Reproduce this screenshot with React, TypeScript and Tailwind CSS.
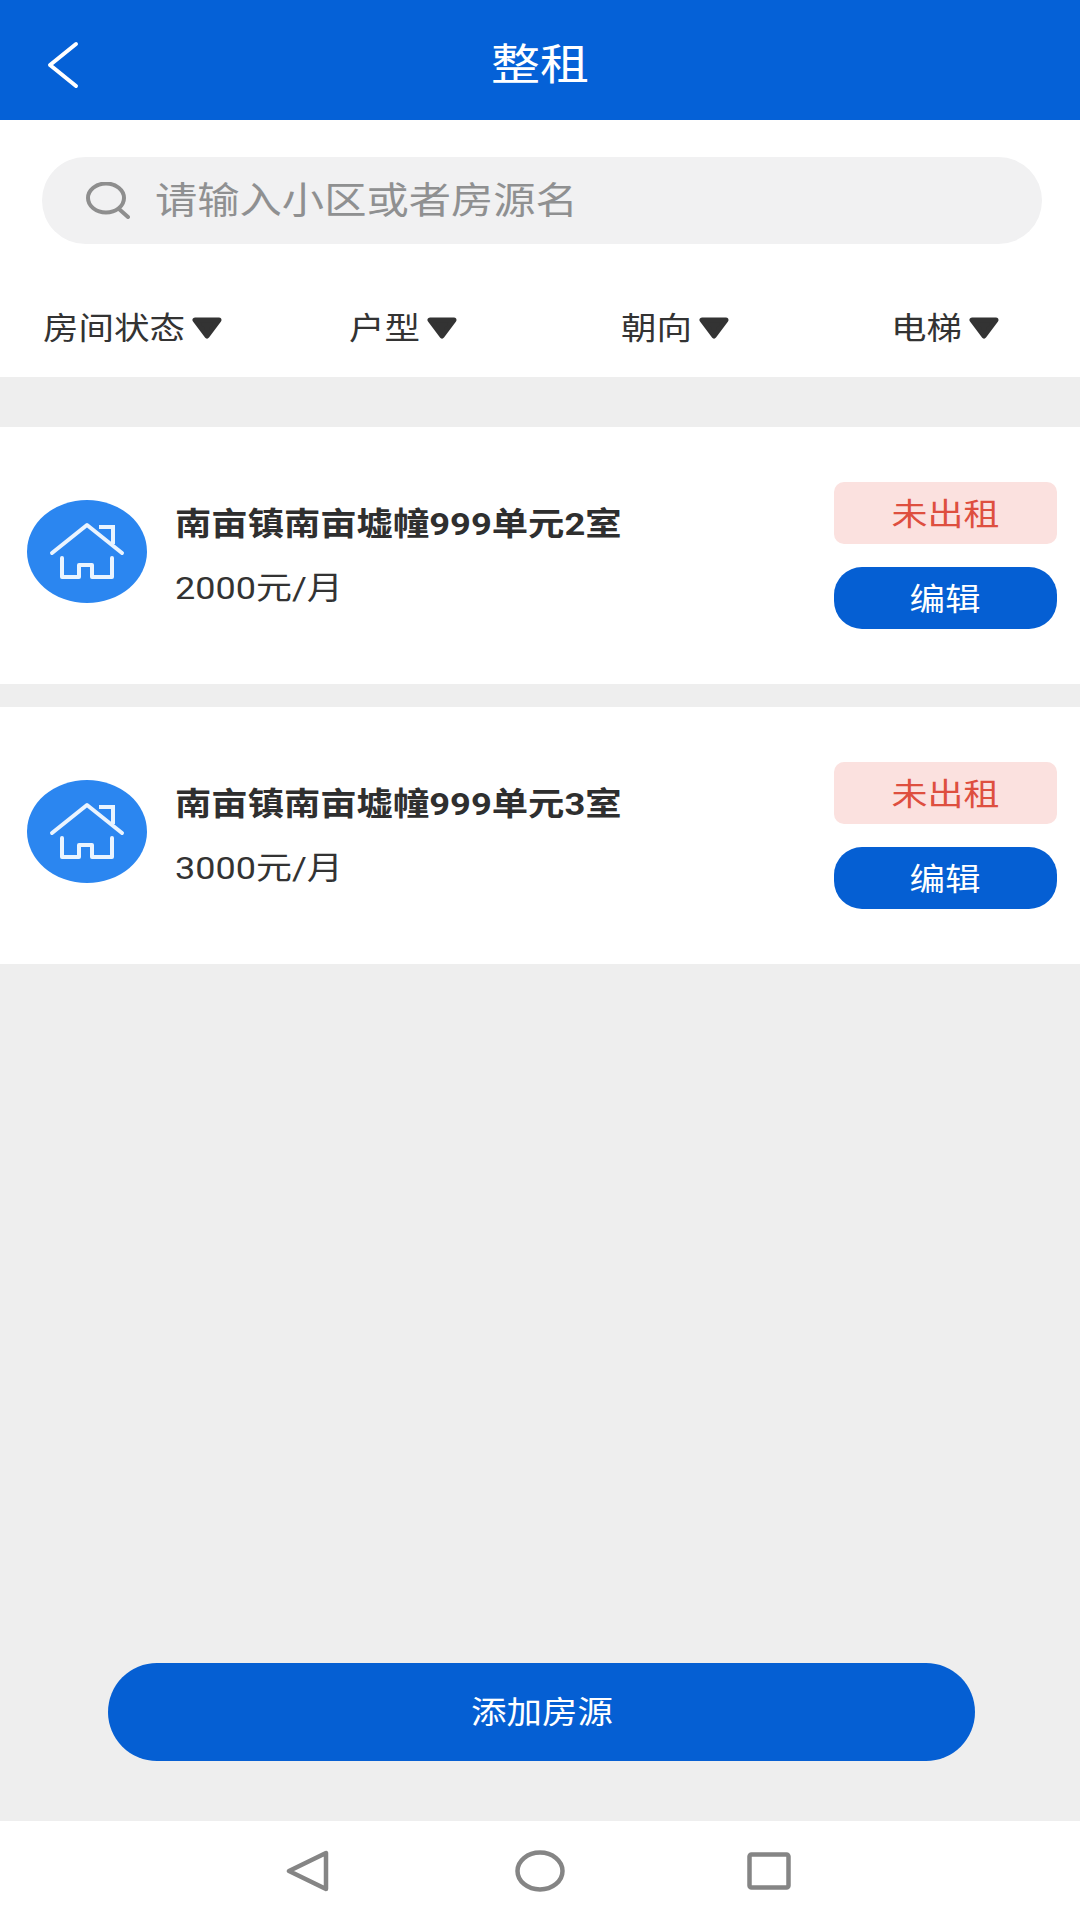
const FONT = "font-['Roboto','Noto_Sans_CJK_SC',sans-serif]";

const rooms = [
  { title: "南亩镇南亩墟幢999单元2室", price: "2000元/月" },
  { title: "南亩镇南亩墟幢999单元3室", price: "3000元/月" },
];

const filters = [
  { label: "房间状态", width: "w-[142px]", cell: "pr-[5px]" },
  { label: "户型", width: "w-[71px]", cell: "pr-[3px]" },
  { label: "朝向", width: "w-[71px]", cell: "" },
  { label: "电梯", width: "w-[71px]", cell: "" },
];

function HouseBadge() {
  return (
    <svg width="120" height="103" viewBox="0 0 120 103" className="mb-[9px] shrink-0">
      <ellipse cx="60" cy="51.5" rx="60" ry="51.5" fill="#2b86f0" />
      <g fill="none" stroke="#eaf4ff" strokeWidth="4" strokeLinecap="round" strokeLinejoin="round">
        <path d="M25 53 L60 25 L95 53" />
        <path d="M72 27 H86 V44" strokeLinecap="butt" strokeLinejoin="miter" />
        <path d="M35 58 V77 H52 V65 H65 V77 H85 V58" />
      </g>
    </svg>
  );
}

function RoomCard({ title, price }: { title: string; price: string }) {
  return (
    <div className="flex h-[257px] items-center bg-white pl-[27px] pr-[23px]">
      <HouseBadge />
      <div className="ml-[28px] min-w-0 flex-1">
        <p className="origin-left scale-x-[1.135] whitespace-nowrap text-[32px] leading-[40px] font-bold text-[#2f2f2f]">{title}</p>
        <p className="mt-[24px] origin-left scale-x-[1.125] whitespace-nowrap text-[32px] leading-[40px] text-[#333333]">{price}</p>
      </div>
      <div className="flex w-[223px] flex-col gap-[23px]">
        <div className="flex h-[62px] items-center justify-center rounded-[10px] bg-[#fbe1df] pt-[5px]">
          <span className="scale-x-[1.16] text-[31px] text-[#de4f3f]">未出租</span>
        </div>
        <button className="flex h-[62px] items-center justify-center rounded-[28px] bg-[#055fd3] pb-[0px] pr-[2px] pt-[5px]">
          <span className="scale-x-[1.145] text-[31px] text-white">编辑</span>
        </button>
      </div>
    </div>
  );
}

export default function App() {
  return (
    <div className={`${FONT} flex h-[1920px] w-[1080px] flex-col overflow-hidden bg-[#eeeeee]`}>
      <header className="relative flex h-[120px] items-center justify-center bg-[#0561d7] pt-[10px]">
        <svg width="34" height="48" viewBox="0 0 34 48" className="absolute left-[46px] top-[41px]">
          <path d="M30 3 L4 24 L30 45" fill="none" stroke="#ffffff" strokeWidth="4" strokeLinecap="round" strokeLinejoin="round" />
        </svg>
        <h1 className="scale-x-[1.14] text-[43px] font-normal text-white">整租</h1>
      </header>

      <div className="bg-white">
        <div className="px-[38px] pt-[37px]">
          <div className="flex h-[87px] w-[1000px] translate-x-[4px] items-center rounded-full bg-[#f1f1f2] pl-[44px]">
            <svg width="44" height="37" viewBox="0 0 44 37" className="shrink-0">
              <ellipse cx="20" cy="16" rx="18" ry="14.5" fill="none" stroke="#8e8e8e" strokeWidth="4" />
              <path d="M33 27 L42 35" stroke="#8e8e8e" strokeWidth="4" strokeLinecap="round" />
            </svg>
            <span className="ml-[25px] origin-left scale-x-[1.143] whitespace-nowrap pt-[2px] text-[37px] text-[#8f9091]">请输入小区或者房源名</span>
          </div>
        </div>
        <div className="grid h-[133px] grid-cols-4 items-center pt-[38px]">
          {filters.map((f) => (
            <div key={f.label} className={`${f.cell} flex items-center justify-center gap-[6px]`}>
              <span className={`${f.width} scale-x-[1.145] whitespace-nowrap text-center text-[31px] text-[#333333]`}>{f.label}</span>
              <svg width="32" height="24" viewBox="0 0 32 24" className="mb-[3px]">
                <path d="M4 4 H28 L16 20 Z" fill="#333333" stroke="#333333" strokeWidth="5" strokeLinejoin="round" />
              </svg>
            </div>
          ))}
        </div>
      </div>

      <div className="mt-[50px] flex flex-col gap-[23px]">
        {rooms.map((room) => (
          <RoomCard key={room.title} title={room.title} price={room.price} />
        ))}
      </div>

      <div className="mt-auto flex justify-center pb-[60px] pl-[3px]">
        <button className="flex h-[98px] w-[867px] items-center justify-center rounded-full bg-[#055fd3] pt-[3px]">
          <span className="scale-x-[1.145] text-[31px] text-white">添加房源</span>
        </button>
      </div>

      <nav className="flex h-[99px] items-center justify-center bg-white pr-[6px]">
        <svg width="44" height="44" viewBox="0 0 44 44" className="ml-[3px]">
          <path d="M40 4 V40 L3 22 Z" fill="none" stroke="#858585" strokeWidth="4.5" strokeLinejoin="round" />
        </svg>
        <svg width="50" height="42" viewBox="0 0 50 42" className="ml-[185px]">
          <ellipse cx="25" cy="21" rx="22.5" ry="18.5" fill="none" stroke="#858585" strokeWidth="4.5" />
        </svg>
        <svg width="44" height="38" viewBox="0 0 44 38" className="ml-[182px]">
          <rect x="2.5" y="2.5" width="39" height="33" rx="2" fill="none" stroke="#858585" strokeWidth="4.5" />
        </svg>
      </nav>
    </div>
  );
}
